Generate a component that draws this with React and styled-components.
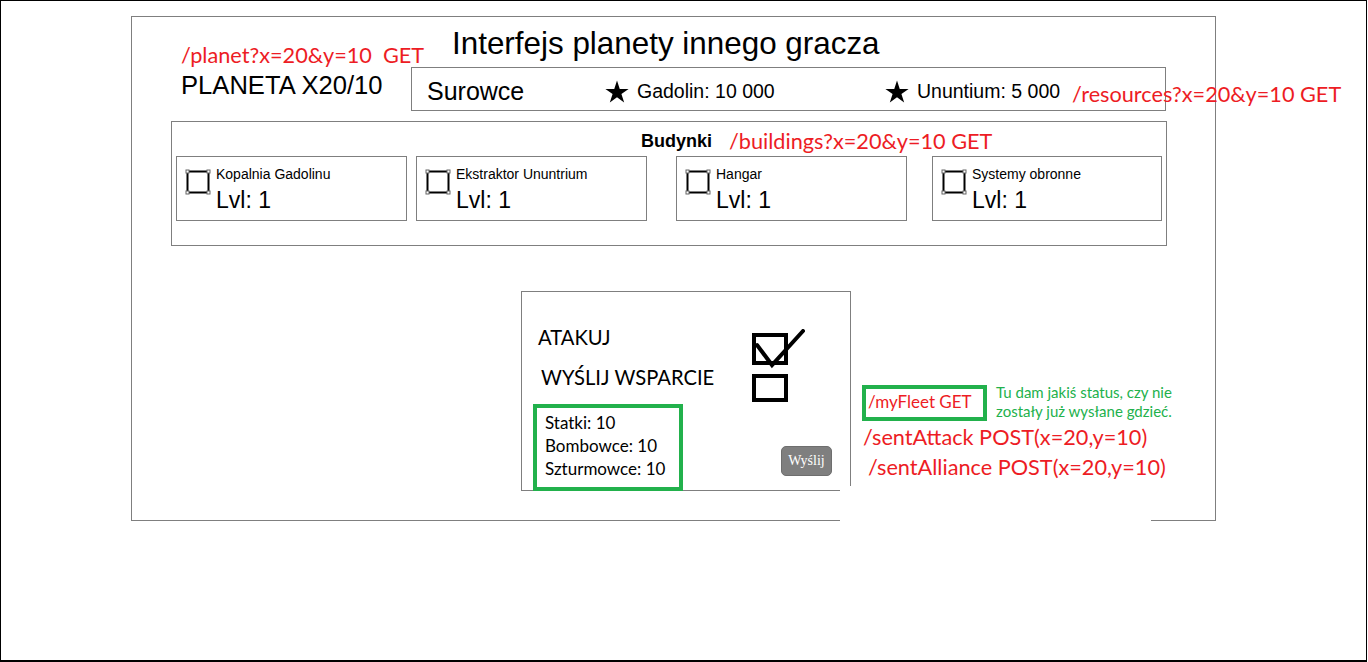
import styled, { createGlobalStyle } from "styled-components";

const colors = {
  red: "#ed1c24",
  green: "#22b14c",
  line: "#7f7f7f",
  ink: "#000",
};

const GlobalStyle = createGlobalStyle`
  * { box-sizing: border-box; }
  body {
    margin: 0;
    background: #fff;
    color: ${colors.ink};
    font-family: "Liberation Sans", Arial, sans-serif;
  }
`;

const Page = styled.div`
  width: 1367px;
  height: 662px;
  border: 1px solid #000;
  border-bottom-width: 2px;
  padding: 15px 0 0 130px;
  overflow: hidden;
`;

const Frame = styled.div`
  width: 1085px;
  height: 505px;
  border: 1px solid ${colors.line};
`;

const Note = styled.div`
  flex: none;
  font-family: Lato, "Open Sans", sans-serif;
  color: ${(p) => (p.$green ? colors.green : colors.red)};
  font-size: ${(p) => p.$size || 21.7}px;
  line-height: ${(p) => p.$lh || 28}px;
  white-space: pre;
  margin-left: ${(p) => p.$ml || 0}px;
  margin-top: ${(p) => p.$mt || 0}px;
`;

/* header */

const Header = styled.div`
  display: flex;
  align-items: flex-start;
`;

const PlanetCol = styled.div`
  width: 279px;
  flex: none;
  padding: 24px 0 0 49px;
`;

const PlanetName = styled.div`
  font-size: 25.6px;
  line-height: 29px;
  margin-top: 2px;
`;

const TitleCol = styled.div`
  display: flex;
  flex-direction: column;
`;

const Title = styled.h1`
  margin: 9px 0 0 41px;
  font-size: 31.4px;
  line-height: 36px;
  font-weight: 400;
  white-space: nowrap;
`;

const ResourceBox = styled.div`
  width: 755px;
  height: 44px;
  margin-top: 5px;
  border: 1px solid ${colors.line};
  padding: 4px 0 0 15px;
  display: flex;
  align-items: center;
`;

const ResourceLabel = styled.span`
  width: 178px;
  flex: none;
  font-size: 25px;
`;

const ResourceItem = styled.span`
  width: ${(p) => p.$w}px;
  flex: none;
  display: flex;
  align-items: center;
  gap: 8px;
  font-size: 19.5px;
  white-space: nowrap;
`;

const Star = () => (
  <svg width="24" height="23" viewBox="-0.5 0 25 23">
    <polygon
      points="12,0 14.85,8.78 24.08,8.78 16.61,14.2 19.46,22.97 12,17.55 4.54,22.97 7.39,14.2 -0.08,8.78 9.15,8.78"
      fill="#000"
    />
  </svg>
);

/* buildings */

const Buildings = styled.section`
  width: 996px;
  height: 125px;
  margin: 10px 0 0 39px;
  border: 1px solid ${colors.line};
`;

const BuildingsHead = styled.div`
  height: 34px;
  display: flex;
  align-items: flex-start;
  padding-left: 469px;
`;

const BuildingsTitle = styled.h2`
  width: 88px;
  margin: 9px 0 0;
  font-size: 18px;
  line-height: 20px;
  font-weight: 700;
`;

const CardRow = styled.div`
  display: flex;
`;

const Card = styled.div`
  width: ${(p) => p.$w}px;
  height: 65px;
  flex: none;
  margin-left: ${(p) => p.$ml}px;
  border: 1px solid ${colors.line};
  padding-left: 8px;
  display: flex;
  align-items: flex-start;
  gap: 5px;
`;

const CardIcon = styled.svg`
  margin-top: 12px;
  flex: none;
`;

const CardText = styled.div`
  padding-top: 9px;
`;

const CardName = styled.div`
  font-size: 14px;
  line-height: 16px;
`;

const CardLevel = styled.div`
  margin-top: 5px;
  font-size: 23px;
  line-height: 26px;
`;

const BuildingIcon = () => (
  <CardIcon width="26" height="26" viewBox="0 0 26 26">
    <rect x="2.5" y="2.5" width="21" height="21" fill="none" stroke="#000" strokeWidth="2" />
    {[
      [1, 1],
      [22, 1],
      [1, 22],
      [22, 22],
    ].map(([x, y]) => (
      <rect key={x + "-" + y} x={x} y={y} width="3" height="3" fill="#fff" stroke="#666" strokeWidth="1" />
    ))}
  </CardIcon>
);

/* fleet */

const FleetRow = styled.div`
  display: flex;
  align-items: flex-start;
  margin: 45px 0 0 389px;
`;

const FleetPanel = styled.div`
  width: 330px;
  height: 200px;
  flex: none;
  border: 1px solid ${colors.line};
  padding-top: 33px;
`;

const OptionRow = styled.div`
  height: ${(p) => p.$h}px;
  display: flex;
  align-items: flex-start;
`;

const OptionLabel = styled.div`
  width: 230px;
  flex: none;
  padding-left: ${(p) => p.$indent}px;
  font-family: Lato, "Open Sans", sans-serif;
  font-size: 20.2px;
  line-height: 24px;
`;

const CheckSvg = styled.svg`
  margin-top: ${(p) => p.$mt}px;
`;

const CheckedBox = () => (
  <CheckSvg $mt={4} width="54" height="40" viewBox="0 0 54 40">
    <rect x="2" y="6" width="32" height="28" fill="none" stroke="#000" strokeWidth="4" />
    <path d="M5 16 L20 36 L51 2" fill="none" stroke="#000" strokeWidth="4" strokeLinecap="round" />
  </CheckSvg>
);

const EmptyBox = () => (
  <CheckSvg $mt={9} width="36" height="28" viewBox="0 0 36 28">
    <rect x="2" y="2" width="32" height="24" fill="none" stroke="#000" strokeWidth="4" />
  </CheckSvg>
);

const FleetFooter = styled.div`
  display: flex;
  align-items: flex-start;
`;

const ShipsBox = styled.div`
  width: 150px;
  height: 87px;
  flex: none;
  margin-left: 11px;
  border: 4px solid ${colors.green};
  padding: 3px 0 0 8px;
  font-family: Lato, "Open Sans", sans-serif;
  font-size: 17px;
  line-height: 23px;
  white-space: nowrap;
`;

const SendButton = styled.button`
  width: 51px;
  height: 30px;
  margin: 42px 0 0 98px;
  border: 1px solid #6e6e6e;
  border-radius: 5px;
  background: #7f7f7f;
  color: #fff;
  font-family: "Liberation Serif", serif;
  font-size: 14px;
  padding: 0;
`;

const ApiNotes = styled.div`
  position: relative;
  margin: 94px 0 0 11px;

  &::after {
    content: "";
    position: absolute;
    left: -22px;
    top: 101px;
    width: 311px;
    height: 37px;
    background: #fff;
  }
`;

const FleetNoteRow = styled.div`
  display: flex;
  align-items: flex-start;
`;

const FleetApiBox = styled.div`
  width: 125px;
  height: 36px;
  flex: none;
  border: 4px solid ${colors.green};
  padding: 2px 0 0 2px;
`;

const buildings = [
  { name: "Kopalnia Gadolinu", level: 1, w: 231, ml: 4 },
  { name: "Ekstraktor Ununtrium", level: 1, w: 231, ml: 9 },
  { name: "Hangar", level: 1, w: 231, ml: 29 },
  { name: "Systemy obronne", level: 1, w: 230, ml: 25 },
];

const ships = [
  ["Statki", 10],
  ["Bombowce", 10],
  ["Szturmowce", 10],
];

export default function App() {
  return (
    <>
      <GlobalStyle />
      <Page>
        <Frame>
          <Header>
            <PlanetCol>
              <Note>{"/planet?x=20&y=10  GET"}</Note>
              <PlanetName>PLANETA X20/10</PlanetName>
            </PlanetCol>
            <TitleCol>
              <Title>Interfejs planety innego gracza</Title>
              <ResourceBox>
                <ResourceLabel>Surowce</ResourceLabel>
                <ResourceItem $w={280}>
                  <Star />
                  Gadolin: 10 000
                </ResourceItem>
                <ResourceItem $w={187}>
                  <Star />
                  Ununtium: 5 000
                </ResourceItem>
                <Note $mt={6}>/resources?x=20&amp;y=10 GET</Note>
              </ResourceBox>
            </TitleCol>
          </Header>

          <Buildings>
            <BuildingsHead>
              <BuildingsTitle>Budynki</BuildingsTitle>
              <Note $mt={5}>/buildings?x=20&amp;y=10 GET</Note>
            </BuildingsHead>
            <CardRow>
              {buildings.map((b) => (
                <Card key={b.name} $w={b.w} $ml={b.ml}>
                  <BuildingIcon />
                  <CardText>
                    <CardName>{b.name}</CardName>
                    <CardLevel>Lvl: {b.level}</CardLevel>
                  </CardText>
                </Card>
              ))}
            </CardRow>
          </Buildings>

          <FleetRow>
            <FleetPanel>
              <OptionRow $h={40}>
                <OptionLabel $indent={16}>ATAKUJ</OptionLabel>
                <CheckedBox />
              </OptionRow>
              <OptionRow $h={39}>
                <OptionLabel $indent={19}>WYŚLIJ WSPARCIE</OptionLabel>
                <EmptyBox />
              </OptionRow>
              <FleetFooter>
                <ShipsBox>
                  {ships.map(([label, count]) => (
                    <div key={label}>
                      {label}: {count}
                    </div>
                  ))}
                </ShipsBox>
                <SendButton>Wyślij</SendButton>
              </FleetFooter>
            </FleetPanel>

            <ApiNotes>
              <FleetNoteRow>
                <FleetApiBox>
                  <Note $size={17} $lh={22}>
                    /myFleet GET
                  </Note>
                </FleetApiBox>
                <Note $green $size={15} $lh={19} $ml={9} $mt={-2}>
                  {"Tu dam jakiś status, czy nie\nzostały już wysłane gdzieć."}
                </Note>
              </FleetNoteRow>
              <Note $ml={1} $mt={2}>
                /sentAttack POST(x=20,y=10)
              </Note>
              <Note $ml={6} $mt={2}>
                /sentAlliance POST(x=20,y=10)
              </Note>
            </ApiNotes>
          </FleetRow>
        </Frame>
      </Page>
    </>
  );
}
